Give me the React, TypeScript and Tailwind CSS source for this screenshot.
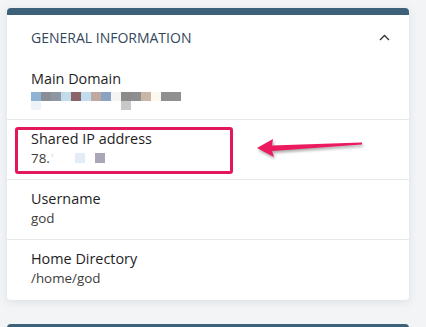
import React from "react";

type Row = {
  label: string;
  value: React.ReactNode;
  highlight?: boolean;
};

const Pixels: React.FC<{ cells: { x: number; y: number; c: string }[] }> = ({ cells }) => (
  <span className="relative inline-block h-[18px] w-[160px] align-top">
    {cells.map((p, i) => (
      <span
        key={i}
        className="absolute h-[9px] w-[10px]"
        style={{ left: p.x, top: p.y, background: p.c }}
      />
    ))}
  </span>
);

const domainCells = [
  "#8fb3d3", "#8a8d96", "#8f96a3", "#c0dbea", "#8a6466", "#c1dcee", "#c0a8a0", "#8aa3c0",
  "#f4f4f0", "#8c8c8c", "#8e8e8e", "#c9b6a6", "#fbf8ee", "#8f8f90", "#909090",
].map((c, i) => ({ x: i * 10, y: 3, c }));
domainCells.push({ x: 0, y: 12, c: "#eef3fa" }, { x: 90, y: 12, c: "#c8c8c8" });

const rows: Row[] = [
  { label: "Main Domain", value: <Pixels cells={domainCells} /> },
  {
    label: "Shared IP address",
    highlight: true,
    value: (
      <span className="flex items-center">
        <span>78.</span>
        <span className="ml-[1px] text-[#d8d8d8]">'</span>
        <span className="ml-[21px] h-[10px] w-[10px] bg-[#e4ecf5]" />
        <span className="ml-[10px] h-[10px] w-[10px] bg-[#aaa6b8]" />
      </span>
    ),
  },
  { label: "Username", value: "god" },
  { label: "Home Directory", value: "/home/god" },
];

export default function App() {
  return (
    <div
      className="min-h-[327px] w-[426px] bg-[#f2f4f6] pt-[8px] pl-[7px] overflow-hidden"
      style={{ fontFamily: '"Open Sans", "Noto Sans", sans-serif' }}
    >
      <section className="relative w-[402px] rounded-[4px] bg-white shadow-[0_2px_8px_rgba(40,60,80,0.10)]">
        <div className="h-[7px] rounded-t-[4px] bg-[#3c6179]" />
        <header className="flex h-[45px] items-center justify-between pl-[24px] pr-[19px]">
          <h2 className="text-[14px] font-normal uppercase text-[#34475c]">
            General Information
          </h2>
          <svg width="11" height="7" viewBox="0 0 11 7" fill="none">
            <path d="M1 6 L5.5 1.5 L10 6" stroke="#333" strokeWidth="1.3" />
          </svg>
        </header>
        <div>
          {rows.map((row, i) => (
            <div
              key={row.label}
              className={
                "relative h-[60px] pt-[9px] pl-[24px] " +
                (i < rows.length - 1 ? "border-b border-[#e6e8ea]" : "")
              }
            >
              <div className="text-[14.4px] leading-[20px] text-[#1e1e1e]">{row.label}</div>
              <div className="text-[13.4px] leading-[18px] text-[#3c3c3c]">{row.value}</div>
              {row.highlight && (
                <div className="absolute left-[8px] top-[7px] h-[47px] w-[218px] rounded-[3px] border-[3px] border-[#e2185b]" />
              )}
            </div>
          ))}
        </div>
        <svg
          className="absolute left-[245px] top-[122px]"
          width="125"
          height="35"
          viewBox="0 0 125 35"
          style={{ filter: "drop-shadow(1px 2px 1.5px rgba(0,0,0,0.35))" }}
        >
          <path
            d="M5 18 L21 9 L20 15.5 L110 12.5 L110 14.5 L20 21 L22 27 Z"
            fill="#ec1a5e"
          />
        </svg>
      </section>
      <div className="mt-[24px] h-[10px] w-[402px] rounded-t-[4px] bg-[#3c6179]" />
    </div>
  );
}
